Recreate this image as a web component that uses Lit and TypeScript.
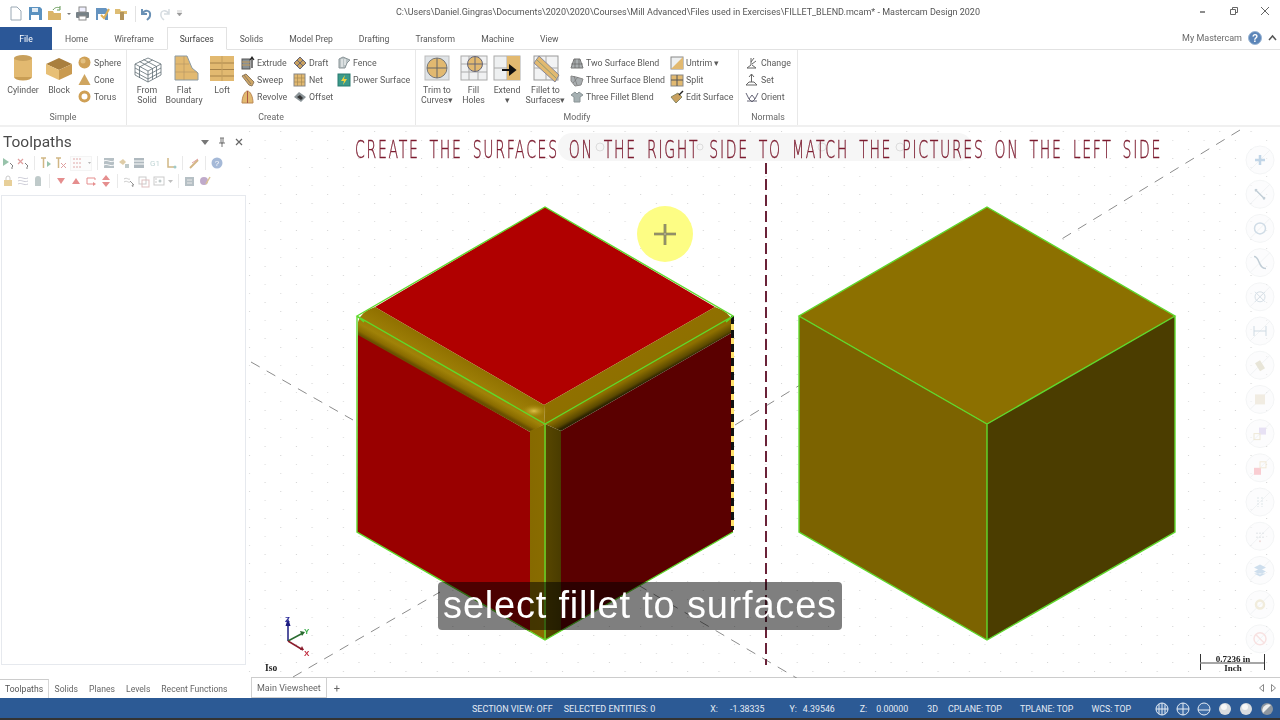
import { LitElement, html, css, svg } from "lit";
import { customElement } from "lit/decorators.js";
import { styleMap } from "lit/directives/style-map.js";

const T = "#e2b970";
const ic = (w: number, body: unknown) => html`<svg class="i" width=${w} height=${w} viewBox="0 0 ${w} ${w}">${body}</svg>`;

const lgIcons: Record<string, unknown> = {
  cyl: svg`<ellipse cx="14" cy="23" rx="9" ry="3.500" fill="#c99e55"/><rect x="5" y="4" width="18" height="19" fill="${T}"/><ellipse cx="14" cy="4" rx="9" ry="3" fill="#c8a05c"/>`,
  block: svg`<path d="M1 10 14 4l13 6-13 6z" fill="#a97f3e"/><path d="M1 10l13 6v10L1 20z" fill="#e7bf76"/><path d="M27 10 14 16v10l13-6z" fill="#c99a50"/>`,
  solid: svg`<path d="M2 10 15 4l13 6v11l-13 7-13-7z M2 10l13 7 13-7 M15 17v11 M6.500 7.500l13 7v11 M10.500 5.500l13 7v11 M2 14l13 7 13-7M2 18l13 7 13-7 M19.500 6l-13 7v11" fill="none" stroke="#5f6d73" stroke-width=".8"/>`,
  flat: svg`<path d="M5 2h12l5 12 6 5v7H5z" fill="${T}" stroke="#8b9aa3"/><path d="M14 2v24 M5 10h14 M5 18h22" stroke="#b79a66" fill="none" stroke-width=".7"/>`,
  loft: svg`<rect x="2" y="2" width="24" height="25" fill="${T}"/><path d="M2 9h24M2 15.500h24M2 22h24" stroke="#a68249"/><path d="M14 2v25" stroke="#c49f5f"/>`,
  trim: svg`<rect x="2" y="2" width="24" height="24" fill="#dfe3e6" stroke="#bbb"/><circle cx="14" cy="14" r="10" fill="${T}" stroke="#777"/><path d="M4 14h20M14 4v20" stroke="#666"/>`,
  fill: svg`<rect x="1" y="2" width="26" height="24" fill="#f0f1f2" stroke="#aaa"/><path d="M1 10h26M1 18h26M9 2v24M18 2v24" stroke="#aaa" fill="none"/><circle cx="15" cy="10" r="7.500" fill="${T}" stroke="#667"/><path d="M8 10h14M15 2.500v15" stroke="#667"/>`,
  extend: svg`<rect x="1" y="2" width="26" height="24" fill="#eef0f1" stroke="#aaa"/><path d="M1 14h14M14 2v24" stroke="#aaa"/><rect x="14" y="2" width="13" height="24" fill="${T}"/><path d="M9 16h11M17 12l5 4-5 4z" stroke="#111" stroke-width="2" fill="#111"/>`,
  fillet: svg`<rect x="2" y="2" width="24" height="24" fill="#f2f3f4" stroke="#999"/><path d="M14 2v24M2 14h24" stroke="#aaa"/><path d="M7 2 27 21l-4 7L2 9z" fill="${T}" stroke="#889"/><path d="M4.500 5.500l20 19" stroke="#8c9a77"/>`,
};
const smIcons: Record<string, unknown> = {
  sphere: svg`<circle cx="6.500" cy="6.500" r="6" fill="#cfa055"/><circle cx="5" cy="5" r="2.500" fill="#e2bf80"/>`,
  cone: svg`<path d="M6.500 1 12.500 12h-12z" fill="#cfa55f"/>`,
  torus: svg`<circle cx="6.500" cy="6.500" r="4.500" fill="none" stroke="#cfa055" stroke-width="3"/>`,
  extrude: svg`<rect x="1" y="3" width="8" height="10" fill="#8a9296" stroke="#555"/><path d="M1 6h8M1 9h8" stroke="#c79b57"/><path d="M11 12V2M9 4l2-3 2 3" stroke="#222" stroke-width="1.200" fill="none"/>`,
  sweep: svg`<path d="M1 3 5 1l8 8-2 4-3-1z" fill="#cfa766" stroke="#8f7a5f"/><path d="M3 2l7 9" stroke="#8f7a5f"/>`,
  revolve: svg`<path d="M1 13C1 6 4 1 6.500 1S12 6 12 13z" fill="${T}" stroke="#b85"/><path d="M6.500 1v12" stroke="#a54"/>`,
  draft: svg`<path d="M7 1l6 6-6 6-6-6z" fill="#c9a15f" stroke="#667"/><path d="M4 4l6 6M10 4l-6 6" stroke="#667"/>`,
  net: svg`<rect x="1" y="1" width="11" height="12" fill="${T}" stroke="#888"/><path d="M4.500 1v12M8.500 1v12M1 5h11M1 9h11" stroke="#a88a55" stroke-width=".7"/>`,
  offset: svg`<path d="M1 7l5-5 7 5-5 5z" fill="#8b9498"/><path d="M4 7l3-2 3 3-2 2z" fill="#333"/>`,
  fence: svg`<path d="M2 12V3l4-2 7 3-3 3-2 5z" fill="#b9c2c4" stroke="#8b9598"/><path d="M5 3v8M8 3v6" stroke="#fff"/>`,
  power: svg`<rect x="1" y="1" width="12" height="12" fill="#3b9a8a" stroke="#2a7a70"/><path d="M8 2 4 8h3l-1 4 4-6H7z" fill="#f2d23c"/>`,
  two: svg`<path d="M1 12 4 3h6l3 9z" fill="#a9aeb0" stroke="#777"/><path d="M1 8h12M5 3v9M9 3v9" stroke="#666" stroke-width=".7"/>`,
  three: svg`<path d="M1 3l5 1 7 2-2 6-6 1-4-5z" fill="#a9aeb0" stroke="#888"/><path d="M4 3l3 9M8 4l-5 6" stroke="#777" stroke-width=".7"/>`,
  fb: svg`<path d="M1 5l4-3 2 2 2-2 4 3-3 2v5H4V7z" fill="#a5b0b2" stroke="#8a9496"/>`,
  untrim: svg`<rect x="1" y="1" width="12" height="12" fill="#eef0f1" stroke="#888"/><path d="M13 1 1 13h12z" fill="${T}"/>`,
  split: svg`<rect x="1" y="2" width="12" height="11" fill="${T}" stroke="#888"/><path d="M1 7h12M7 2v11" stroke="#555"/>`,
  edit: svg`<path d="M1 7 8 3l4 4-6 6z" fill="#c9a15f" stroke="#886"/><path d="M9 5l4-4" stroke="#222" stroke-width="1.500"/>`,
  change: svg`<path d="M6 2v7L2 12h9L7 9M9 2 6 6M11 5 7 8" stroke="#666" fill="none"/>`,
  set: svg`<path d="M6.500 1v8M4 4l2.500-3L9 4M1 12h11L9 9H4z" stroke="#666" fill="none"/>`,
  orient: svg`<path d="M1 3l3 6 3-4 3 4 3-6M2 11h10M4 9l3 3 3-3" stroke="#667" fill="none"/>`,
};

@customElement("app-root")
export class AppRoot extends LitElement {
  static styles = css`
    :host { display: block; width: 1280px; height: 720px; position: relative; overflow: hidden; background: #fff;
      font-family: Roboto, "Liberation Sans", sans-serif; color: #555; font-size: 8.800px; }
    * { box-sizing: border-box; }
    .i { display: block; flex: none; overflow: visible; }
    .page { display: flex; flex-direction: column; height: 720px; filter: blur(.35px); }
    .title { height: 27px; flex: none; display: flex; align-items: center; position: relative; padding-left: 8px; }
    .qa { display: flex; align-items: center; gap: 4.500px; opacity: .85; }
    .qa .sep { width: 1px; height: 16px; background: #ddd; margin: 0 -2px 0 1px; }
    .tt { position: absolute; left: 396px; top: 7px; width: 584px; white-space: nowrap; font-size: 9px; color: #555; }
    .wc { margin-left: auto; display: flex; gap: 21px; padding-right: 10px; margin-top: -5px; }
    .tabs { height: 23px; flex: none; display: flex; border-bottom: 1px solid #e2e2e2; align-items: stretch; font-size: 8.600px; }
    .tab { padding: 0 13px; display: flex; align-items: center; color: #595959; margin-bottom: -1px; }
    .tab.file { width: 52px; justify-content: center; background: #2b5797; color: #fff; padding: 0; }
    .tab.on { background: #fff; border: 1px solid #e2e2e2; border-bottom: 1px solid #fff; padding: 0 12px; color: #444; }
    .my { margin-left: auto; display: flex; align-items: center; gap: 6px; padding-right: 3px; color: #6a6a6a; font-size: 9px; }
    .help { width: 14px; height: 14px; border-radius: 50%; background: #5b85b8; color: #fff; font: bold 10px "Liberation Sans", sans-serif; display: flex; align-items: center; justify-content: center; border: 1px solid #9ab5d4; }
    .ribbon { height: 77px; flex: none; display: flex; background: #fff; border-bottom: 2px solid #f0f0f0; }
    .group { display: flex; flex-direction: column; border-right: 1px solid #e8e8e8; height: 75px; }
    .g1 { width: 127px; } .g1 .gb { padding-left: 3px; }
    .g2 { width: 289px; } .g2 .gb { padding-left: 6px; }
    .g3 { width: 323px; } .g3 .gb { padding-left: 4px; }
    .g4 { width: 59px; } .g4 .gb { padding-left: 6px; }
    .gb { flex: 1; display: flex; padding-top: 4px; }
    .gl { height: 19px; text-align: center; color: #666; line-height: 22px; }
    .lg { flex: none; display: flex; flex-direction: column; align-items: center; line-height: 10px; text-align: center; white-space: nowrap; color: #5a5a5a; }
    .lg .ico { height: 31px; display: flex; align-items: flex-start; }
    .col { flex: none; display: flex; flex-direction: column; }
    .sp3 { width: 3px; flex: none; } .sp4 { width: 4px; flex: none; }
    .sm { height: 17px; display: flex; align-items: center; gap: 3px; white-space: nowrap; color: #5a5a5a; }
    .main { flex: 1; display: flex; min-height: 0; }
    .panel { width: 246px; flex: none; display: flex; flex-direction: column; background: #fff; padding-top: 3px; }
    .ph { display: flex; align-items: center; height: 24px; padding: 0 2px 0 3px; font-size: 15.500px; color: #4a4a4a; }
    .ph .x { margin-left: auto; display: flex; gap: 9px; align-items: center; padding-right: 1px; }
    .tb { display: flex; align-items: center; height: 18px; padding-left: 2px; gap: 3px; opacity: .62; }
    .tb .s { width: 1px; height: 14px; background: #ddd; margin: 0 2px; }
    .box { flex: 1; margin: 5px 0 13px 1px; border: 1px solid #e6e9ee; background: #fff; }
    .view { flex: 1; position: relative; overflow: hidden; }
    .view svg { position: absolute; left: 0; top: 0; }
    .bot { height: 20px; flex: none; display: flex; font-size: 8.600px; }
    .lt { width: 251px; flex: none; display: flex; padding-top: 1px; }
    .bt { padding: 0 5.500px; display: flex; align-items: center; color: #666; height: 19px; white-space: nowrap; }
    .bt.on { border: 1px solid #d6d6d6; border-top-color: #ccc; border-left: none; border-bottom: none; color: #555; padding: 0 5px; }
    .rt { flex: 1; display: flex; border-top: 1px solid #ccc; margin-top: -1px; align-items: center; height: 21px; }
    .vs { height: 20px; border: 1px solid #d0d0d0; border-top: none; padding: 0 5px; display: flex; align-items: center; color: #666; font-size: 9px; }
    .plus { margin-left: 7px; font-size: 11px; color: #666; }
    .arr { margin-left: auto; display: flex; gap: 7px; padding-right: 4px; }
    .status { height: 20px; flex: none; background: #2c5a95; display: flex; align-items: center; color: #e4ebf4; font-size: 8.800px; padding: 1px 0 0 472px; white-space: nowrap; }
    .sg { display: flex; gap: 11px; font-size: 9px; }
    .sx { display: flex; gap: 25px; margin-left: 55px; }
    .sx span b { font-weight: 400; }
    .kx { margin-right: 12px; } .ky { margin-right: 6px; } .kz { margin-right: 9px; }
    .sp { display: flex; gap: 18px; margin-left: 19px; }
    .sp.sp2 { margin-left: 10px; }
    .sic { display: flex; gap: 7px; margin-left: 24px; }
    .strip { height: 2px; flex: none; background: #333; }
    .cap { position: absolute; left: 50%; top: 582px; transform: translateX(-50%); width: 404px; height: 48px; background: rgba(0,0,0,.5); border-radius: 4px; color: #fff;
      font: 38px "Liberation Sans", sans-serif; letter-spacing: .8px; display: flex; align-items: center; justify-content: center; padding-bottom: 2px; white-space: nowrap; filter: blur(.3px); }
  `;

  lg(w: number, icon: string, l1: string, l2?: unknown) {
    return html`<div class="lg" style=${styleMap({ width: w + "px" })}><div class="ico">${ic(28, lgIcons[icon])}</div><div>${l1}</div>${l2 ? html`<div>${l2}</div>` : ""}</div>`;
  }
  col(w: number, items: [string, string][]) {
    return html`<div class="col" style=${styleMap({ width: w + "px" })}>${items.map(([i, l]) => html`<div class="sm">${ic(13, smIcons[i])}<span>${l}</span></div>`)}</div>`;
  }
  qa() {
    const b = (c: unknown) => ic(15, c);
    return html`<div class="qa">
      ${b(svg`<path d="M3 1h6l4 4v9H3z" fill="#fff" stroke="#8a9aa8"/>`)}
      ${b(svg`<path d="M1 1h11l2 2v11H1z" fill="#3f7fb5"/><rect x="4" y="2" width="6" height="4" fill="#dfe9f2"/><rect x="3" y="9" width="8" height="5" fill="#fff"/>`)}
      ${b(svg`<path d="M1 5h5l1 2h7v7H1z" fill="#d4a94f"/><path d="M6 4c2-3 5-3 7-2M13 0v4h-3" stroke="#4d8a3c" fill="none"/>`)}
      <svg class="i" width="4" height="4"><path d="M0 1h4L2 3z" fill="#666"/></svg>
      ${b(svg`<rect x="1" y="6" width="13" height="6" rx="1" fill="#5f6b73"/><rect x="4" y="1" width="7" height="5" fill="#eef" stroke="#777"/><rect x="4" y="10" width="7" height="4" fill="#fff" stroke="#777"/>`)}
      ${b(svg`<path d="M1 2h10l2 2v10H1z" fill="#4a80b5"/><rect x="3" y="8" width="7" height="6" fill="#fff"/><path d="M6 9l3 3 5-9" stroke="#d9a23a" stroke-width="2" fill="none"/>`)}
      ${b(svg`<path d="M1 3h5l1 2h6v3H1z" fill="#d9b25c"/><rect x="6" y="6" width="4" height="8" fill="#a5803f"/>`)}
      <span class="sep"></span>
      ${b(svg`<path d="M4 3v5h5M4 8c3-5 9-4 8 2-.3 2-2 3-3 4" fill="none" stroke="#4f7da8" stroke-width="2"/>`)}
      ${b(svg`<path d="M11 3v5H6M11 8C8 3 2 4 3 10c.3 2 2 3 3 4" fill="none" stroke="#cfd6dc" stroke-width="1.500"/>`)}
      <svg class="i" width="5" height="7"><path d="M0 1h5M0 3h5L2.500 6z" fill="#888" stroke="#888" stroke-width=".5"/></svg>
    </div>`;
  }
  tb1() {
    const s = html`<span class="s"></span>`;
    const b = (c: unknown) => ic(12, c);
    return html`<div class="tb">
      ${b(svg`<path d="M1 1l6 4-6 4z" fill="#5aa078"/><path d="M8 6l3 3-1 1v2" stroke="#333" fill="none"/>`)}
      ${b(svg`<path d="M1 2l5 5M6 2l-5 5" stroke="#c66" stroke-width="1.200"/><path d="M8 6l3 3-1 1v2" stroke="#333" fill="none"/>`)}
      ${s}
      ${b(svg`<path d="M1 1h5M3.500 1v10" stroke="#b58a3a" stroke-width="1.500"/><path d="M7 4l4 3-4 3z" fill="#5aa078"/>`)}
      ${b(svg`<path d="M1 1h5M3.500 1v10" stroke="#b58a3a" stroke-width="1.500"/><path d="M6 6l5 5M11 6l-5 5" stroke="#c66"/>`)}
      <svg class="i" width="22" height="15"><rect x=".5" y=".5" width="21" height="14" fill="#fbfbfb" stroke="#eee"/><path d="M3 3h8M3 7h8M3 11h8" stroke="#c77" stroke-dasharray="2 1"/><path d="M18 6h3l-1.500 2z" fill="#888"/></svg>
      ${s}
      ${b(svg`<rect x="1" y="1" width="10" height="10" fill="#8a9aa3"/><path d="M1 4c3-2 6 2 10 0M1 8c3-2 6 2 10 0" stroke="#fff" fill="none"/>`)}
      ${b(svg`<path d="M1 5l4-3 3 3-3 3z" fill="#cdb073"/><rect x="7" y="7" width="4" height="4" fill="#9aa"/>`)}
      ${b(svg`<rect x="1" y="1" width="10" height="10" fill="#7f8f98"/><path d="M1 4h10M1 7h10" stroke="#fff"/>`)}
      <svg class="i" width="14" height="12"><text x="7" y="9" font-size="8" text-anchor="middle" fill="#9bb" font-family="Roboto">G1</text></svg>
      ${b(svg`<path d="M3 1v9h7" stroke="#b58a3a" stroke-width="1.500" fill="none"/><circle cx="10" cy="10" r="1.500" fill="#6aa"/>`)}
      ${s}
      ${b(svg`<path d="M2 11 10 3" stroke="#b98a3a" stroke-width="2"/><path d="M4 6l6-4" stroke="#c66"/>`)}
      ${s}
      ${b(svg`<circle cx="6" cy="6" r="5.500" fill="#6f8fc0"/><text x="6" y="9" font-size="8" text-anchor="middle" fill="#fff" font-family="Liberation Sans">?</text>`)}
    </div>`;
  }
  tb2() {
    const s = html`<span class="s"></span>`;
    const b = (c: unknown) => ic(12, c);
    return html`<div class="tb">
      ${b(svg`<rect x="2" y="5" width="8" height="6" fill="#d9b25c"/><path d="M4 5V3a2 2 0 0 1 4 0v2" stroke="#aaa" fill="none"/>`)}
      ${b(svg`<path d="M1 3c3-2 6 2 10 0M1 6c3-2 6 2 10 0M1 9c3-2 6 2 10 0" stroke="#aab" fill="none"/>`)}
      ${b(svg`<path d="M3 11V4a3 3 0 0 1 6 0v7z" fill="#9aa"/>`)}
      ${s}
      ${b(svg`<path d="M2 3h8L6 9z" fill="#d64a4a"/>`)}
      ${b(svg`<path d="M2 9h8L6 3z" fill="#d64a4a"/>`)}
      ${b(svg`<path d="M2 3h8v2M2 3v6h6" stroke="#d64a4a" fill="none"/><path d="M8 7l3 2-3 2z" fill="#d64a4a"/>`)}
      ${b(svg`<path d="M6 0l4 5H2zM6 12l4-5H2z" fill="#d64a4a"/>`)}
      ${s}
      ${b(svg`<path d="M1 4c3-2 4 1 6 0M1 7c3-2 4 1 6 0" stroke="#aaa" fill="none"/><path d="M7 6l4 4-2 0 1 2" stroke="#555" fill="none"/>`)}
      ${b(svg`<rect x="1" y="2" width="7" height="7" fill="none" stroke="#aaa"/><rect x="4" y="5" width="7" height="7" fill="none" stroke="#c99"/>`)}
      ${b(svg`<rect x="1" y="2" width="10" height="8" fill="none" stroke="#aaa"/><circle cx="7" cy="6" r="1.500" fill="#9aa"/><path d="M2 4h2M2 7h2" stroke="#aaa"/>`)}
      <svg class="i" width="5" height="4"><path d="M0 1h5L2.500 4z" fill="#999"/></svg>
      ${s}
      ${b(svg`<rect x="1" y="2" width="9" height="9" fill="#8a9aa3"/><path d="M3 5h5M3 8h5" stroke="#ddd"/>`)}
      ${b(svg`<circle cx="5" cy="6" r="4" fill="#97a"/><path d="M7 9l4-7" stroke="#c9a050" stroke-width="1.500"/>`)}
    </div>`;
  }
  view() {
    const tools: unknown[] = [svg`<path d="M-5 0h10M0-5v10" stroke="#8fb3d4" stroke-width="2.500"/>`,
      svg`<path d="M-5-5 5 5M-3-5l-2 2M5 3 3 5" stroke="#8fa5b5" stroke-width="1.500"/>`,
      svg`<circle r="5.500" fill="none" stroke="#a9bfd2" stroke-width="1.500"/>`,
      svg`<path d="M-6-6c6 0 4 12 12 12" fill="none" stroke="#8fa5b5" stroke-width="1.500"/>`,
      svg`<circle r="5" fill="none" stroke="#b5c5d2"/><path d="M-5-5 5 5M5-5-5 5" stroke="#b5c5d2"/>`,
      svg`<path d="M-6-5v10M6-5V5M-6 0H6" fill="none" stroke="#a5bccd"/>`,
      svg`<path d="M-5-2 0-5 5 3 0 6z" fill="#d5cfb8"/>`,
      svg`<path d="M-5-5h10v10h-10z" fill="#e5dccb"/>`,
      svg`<rect x="-1" y="-6" width="7" height="7" fill="#d4c9ec"/><rect x="-6" y="0" width="6" height="6" fill="none" stroke="#e0d5b8"/>`,
      svg`<rect x="-6" y="0" width="7" height="7" fill="#f5a5ad"/><rect x="0" y="-6" width="6" height="6" fill="none" stroke="#e8d8b8"/>`,
      svg`<path d="M-2-5v10M2-5v10" stroke="#c5d0d8" stroke-dasharray="2 1"/>`,
      svg`<path d="M-4-3h8M-4 1h8" stroke="#c5ccd2" stroke-dasharray="2 1"/><circle cy="5" r="1" fill="#dbb"/>`,
      svg`<path d="M0-6 6-3 0 0-6-3zM0-2 6 1 0 4-6 1zM-6 3 0 6 6 3" fill="#a6c3de"/>`,
      svg`<circle r="4" fill="none" stroke="#e5dcc0" stroke-width="2.500"/>`,
      svg`<circle r="6" fill="none" stroke="#f2c9c9" stroke-width="1.500"/><path d="M-4-4 4 4" stroke="#f2c9c9" stroke-width="1.500"/>`];
    return svg`
      <defs>
        <pattern id="d" x="246" y="127" width="31.300" height="36" patternUnits="userSpaceOnUse">
          <rect x="3" y="4" width="1" height="1" fill="#d2d2d2"/><rect x="18.600" y="13" width="1" height="1" fill="#dcdcdc"/>
          <rect x="3" y="22" width="1" height="1" fill="#dcdcdc"/><rect x="18.600" y="31" width="1" height="1" fill="#d2d2d2"/>
        </pattern>
        <linearGradient id="bl" gradientUnits="userSpaceOnUse" x1="460" y1="355" x2="445" y2="382">
          <stop offset="0" stop-color="#907000"/><stop offset=".7" stop-color="#a08208"/><stop offset=".9" stop-color="#8a6c00"/><stop offset="1" stop-color="#6a5000"/>
        </linearGradient>
        <linearGradient id="br" gradientUnits="userSpaceOnUse" x1="630" y1="355" x2="645" y2="382">
          <stop offset="0" stop-color="#907000"/><stop offset=".65" stop-color="#8e7000"/><stop offset=".9" stop-color="#5a4800"/><stop offset="1" stop-color="#2e2400"/>
        </linearGradient>
        <linearGradient id="bv" x1="0" y1="0" x2="1" y2="0">
          <stop offset="0" stop-color="#866a00"/><stop offset=".5" stop-color="#8a6c00"/><stop offset=".52" stop-color="#574600"/><stop offset="1" stop-color="#4a3c00"/>
        </linearGradient>
        <radialGradient id="gl"><stop offset="0" stop-color="#dcc24a"/><stop offset="1" stop-color="#a08000" stop-opacity="0"/></radialGradient>
      </defs>
      <rect x="246" y="127" width="1034" height="553" fill="url(#d)"/>
      <rect x="558" y="133" width="414" height="28" rx="14" fill="#f6f6f6"/>
      <g fill="none" stroke="#dcdcdc"><circle cx="600" cy="147" r="4"/><circle cx="700" cy="147" r="3"/><circle cx="822" cy="147" r="4"/><circle cx="900" cy="147" r="4"/></g>
      <g stroke="#8c8c8c" stroke-width="1" stroke-dasharray="10 8" fill="none">
        <path d="M251 362 353 420M1240 130 1060 240M735 425 800 385M293 677 440 592M638 585 800 680"/>
      </g>
      <path d="M766 163V665" stroke="#6a2238" stroke-width="2" stroke-dasharray="11 5"/>
      <text transform="translate(355 158) scale(.562 1)" textLength="1436" lengthAdjust="spacing" font-size="25" letter-spacing="3" word-spacing="7" font-weight="200" fill="#7c1c30" stroke="#7c1c30" stroke-width=".4" font-family="DejaVu Sans, sans-serif">CREATE THE SURFACES ON THE RIGHT SIDE TO MATCH THE PICTURES ON THE LEFT SIDE</text>

      <path d="M375 307 545 207 715 307 544 405z" fill="#b00000"/>
      <path d="M358 333 530 432V632L357 532z" fill="#990000"/>
      <path d="M561 431 733 332V532L561 631z" fill="#5a0000"/>
      <path d="M375 307 544 405 545 424 530 432 358 335V322Q360 312 375 307z" fill="url(#bl)"/>
      <path d="M715 307 544 405 545 424 561 431 733 332V322Q730 312 715 307z" fill="url(#br)"/>
      <path d="M530 431 545 424 561 431V631L545 640 530 631z" fill="url(#bv)"/>
      <ellipse cx="534" cy="411" rx="14" ry="7" fill="url(#gl)"/>
      <path d="M732.500 316V530" stroke="#ffe26a" stroke-width="3"/>
      <path d="M732.500 316V530" stroke="#111" stroke-width="3" stroke-dasharray="8 6"/>
      <g fill="none" stroke="#5fd92c" stroke-width="1.400">
        <path d="M357 316 545 207 733 316 545 424zM357 316V532L545 640 733 532M545 424V640M357 316l7 6M733 316l-7 6"/>
      </g>

      <path d="M987 207 1175 316 987 424 799 316z" fill="#8c7000"/>
      <path d="M799 316 987 424V640L799 532z" fill="#7c6300"/>
      <path d="M1175 316 987 424V640L1175 532z" fill="#4b3d00"/>
      <g fill="none" stroke="#5fd92c" stroke-width="1.400"><path d="M987 207 1175 316 987 424 799 316zM799 316V532L987 640 1175 532V316M987 424V640"/></g>

      <circle cx="665" cy="234" r="28" fill="#fdfd84"/>
      <path d="M665 224V245M654 234H676" stroke="#6d6a3a" stroke-width="2.600"/>
      <path d="M665 224V245M654 234H676" stroke="#e8e8d8" stroke-width=".6"/>

      <path d="M288 641V622" stroke="#1c1c80" stroke-width="1.500"/><path d="M285.500 626 288 618 290.500 626z" fill="#1c1c80"/>
      <path d="M288 641 303 633" stroke="#2a6b30" stroke-width="1.500"/><path d="M300 631 305 632 302 636z" fill="#2a6b30"/>
      <path d="M288 641 303 650" stroke="#8a1c2c" stroke-width="1.500"/><path d="M300 650 304 650 302 646z" fill="#8a1c2c"/>
      <g font-family="Liberation Sans, sans-serif" font-size="8" font-weight="700">
        <text x="285" y="622" fill="#2a2a9a">Z</text><text x="304" y="634" fill="#3cae4c">Y</text><text x="304" y="656" fill="#c02a3c">X</text>
      </g>
      <text x="265" y="671" font-family="Liberation Serif, serif" font-size="9.500" font-weight="700" fill="#222">Iso</text>

      <path d="M1200.500 654V670M1264.500 654V670" stroke="#333"/><path d="M1200 663H1264" stroke="#888" stroke-width="1.500"/>
      <g font-family="Liberation Serif, serif" font-size="9" font-weight="700" fill="#222" text-anchor="middle">
        <text x="1233" y="662">0.7236 in</text><text x="1233" y="670.500">Inch</text>
      </g>

      ${tools.map((t, i) => svg`<g transform="translate(1260 ${160 + i * 34.2})" opacity=".55">
        <circle r="14" fill="#f9fafb" stroke="#eaecee"/><path d="M-10 10 10-10" stroke="#e6e9ec"/>${t}</g>`)}
    `;
  }
  render() {
    return html`<div class="page">
      <div class="title">
        ${this.qa()}
        <div class="tt">C:\\Users\\Daniel.Gingras\\Documents\\2020\\2020\\Courses\\Mill Advanced\\Files used in Exercises\\FILLET_BLEND.mcam* - Mastercam Design 2020</div>
        <div class="wc">
          <svg class="i" width="10" height="10"><path d="M2 6h5" stroke="#666" stroke-width="1.500"/></svg>
          <svg class="i" width="10" height="10"><path d="M1.500 3.500h5v5h-5zM3.500 3.500v-2h5v5h-2" fill="none" stroke="#666"/></svg>
          <svg class="i" width="10" height="10"><path d="M1 1 9 9M9 1 1 9" stroke="#666"/></svg>
        </div>
      </div>
      <div class="tabs">
        <div class="tab file">File</div>
        <div class="tab">Home</div><div class="tab">Wireframe</div><div class="tab on">Surfaces</div><div class="tab">Solids</div>
        <div class="tab">Model Prep</div><div class="tab">Drafting</div><div class="tab">Transform</div><div class="tab">Machine</div><div class="tab">View</div>
        <div class="my">My Mastercam <span class="help">?</span>
          <svg class="i" width="9" height="6"><path d="M1 5 4.500 1 8 5" fill="none" stroke="#555" stroke-width="1.500"/></svg></div>
      </div>
      <div class="ribbon">
        <div class="group g1"><div class="gb">
          ${this.lg(40, "cyl", "Cylinder")}${this.lg(32, "block", "Block")}<span class="sp3"></span>
          ${this.col(48, [["sphere", "Sphere"], ["cone", "Cone"], ["torus", "Torus"]])}
        </div><div class="gl">Simple</div></div>
        <div class="group g2"><div class="gb">
          ${this.lg(28, "solid", "From", "Solid")}${this.lg(46, "flat", "Flat", "Boundary")}${this.lg(30, "loft", "Loft")}<span class="sp4"></span>
          ${this.col(52, [["extrude", "Extrude"], ["sweep", "Sweep"], ["revolve", "Revolve"]])}
          ${this.col(44, [["draft", "Draft"], ["net", "Net"], ["offset", "Offset"]])}
          ${this.col(75, [["fence", "Fence"], ["power", "Power Surface"]])}
        </div><div class="gl">Create</div></div>
        <div class="group g3"><div class="gb">
          ${this.lg(34, "trim", "Trim to", "Curves▾")}${this.lg(39, "fill", "Fill", "Holes")}${this.lg(28, "extend", "Extend", "▾")}${this.lg(49, "fillet", "Fillet to", "Surfaces▾")}
          ${this.col(100, [["two", "Two Surface Blend"], ["three", "Three Surface Blend"], ["fb", "Three Fillet Blend"]])}
          ${this.col(65, [["untrim", "Untrim ▾"], ["split", "Split"], ["edit", "Edit Surface"]])}
        </div><div class="gl">Modify</div></div>
        <div class="group g4"><div class="gb">
          ${this.col(50, [["change", "Change"], ["set", "Set"], ["orient", "Orient"]])}
        </div><div class="gl">Normals</div></div>
      </div>
      <div class="main">
        <div class="panel">
          <div class="ph">Toolpaths<div class="x">
            <svg class="i" width="8" height="5"><path d="M0 0h8L4 5z" fill="#777"/></svg>
            <svg class="i" width="8" height="10"><path d="M2 1h4M3 1v5h2V1M1 6h6M4 6v4" stroke="#777" fill="none"/></svg>
            <svg class="i" width="8" height="8"><path d="M1 1 7 7M7 1 1 7" stroke="#666" stroke-width="1.200"/></svg>
          </div></div>
          ${this.tb1()}${this.tb2()}
          <div class="box"></div>
        </div>
        <div class="view"><svg width="1034" height="553" viewBox="246 127 1034 553">${this.view()}</svg></div>
      </div>
      <div class="bot">
        <div class="lt"><div class="bt on">Toolpaths</div><div class="bt">Solids</div><div class="bt">Planes</div><div class="bt">Levels</div><div class="bt">Recent Functions</div></div>
        <div class="rt"><div class="vs">Main Viewsheet</div><div class="plus">+</div>
          <div class="arr">
            <svg class="i" width="5" height="8"><path d="M4.500 .5v7L.5 4z" fill="none" stroke="#888"/></svg>
            <svg class="i" width="5" height="8"><path d="M.5 .5v7l4-3.500z" fill="none" stroke="#888"/></svg>
          </div></div>
      </div>
      <div class="status">
        <div class="sg"><span>SECTION VIEW: OFF</span><span>SELECTED ENTITIES: 0</span></div>
        <div class="sx"><span><b class="kx">X:</b>-1.38335</span><span><b class="ky">Y:</b>4.39546</span><span><b class="kz">Z:</b>0.00000</span></div>
        <div class="sp"><span>3D</span></div>
        <div class="sp sp2"><span>CPLANE: TOP</span><span>TPLANE: TOP</span><span>WCS: TOP</span></div>
        <div class="sic">
          ${[0, 1, 2].map((k) => html`<svg class="i" width="14" height="14" viewBox="-7 -7 14 14"><circle r="6" fill="#3f6ca5" stroke="#e6edf5"/><path d=${k === 0 ? "M-6 0H6M0-6V6M-3-5V5M3-5V5" : k === 1 ? "M-6 0H6M0-6V6" : "M-6 1H6"} stroke="#e6edf5" fill="none"/></svg>`)}
          ${[0, 1, 2].map((k) => html`<svg class="i" width="14" height="14" viewBox="-7 -7 14 14"><circle r="6" fill=${k === 2 ? "#8d969f" : "#d9dcdf"}/>${k === 2 ? svg`<path d="M-4 4 4-4A6 6 0 0 0-4 4z" fill="#ededed"/>` : svg`<circle cx="-1" cy="-2" r="3" fill="#f7f7f7"/>`}</svg>`)}
        </div>
      </div>
      <div class="strip"></div>
    </div>
    <div class="cap">select fillet to surfaces</div>`;
  }
}
